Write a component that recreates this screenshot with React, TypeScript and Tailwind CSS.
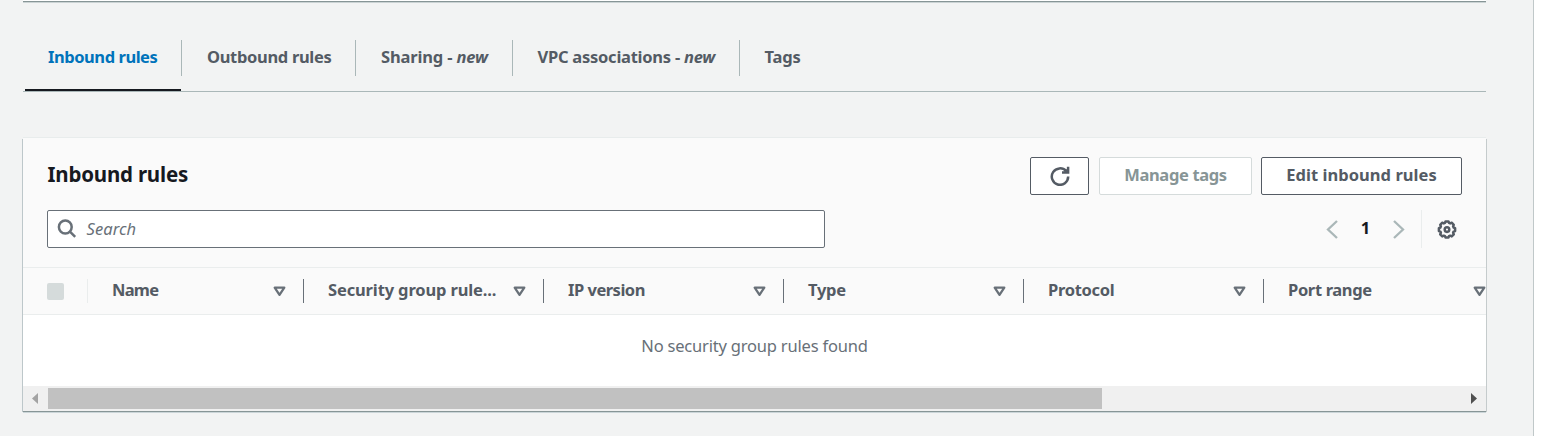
import React from "react";

const tabs = [
  { label: "Inbound rules", width: "w-[157px] pl-[23px]", spacing: "tracking-[-0.45px]", active: true },
  { label: "Outbound rules", width: "w-[174px] pl-[25px]", spacing: "tracking-[-0.33px]" },
  { label: "Sharing - ", isNew: true, width: "w-[157px] pl-[25px]", spacing: "tracking-[-0.15px]" },
  { label: "VPC associations - ", isNew: true, width: "w-[227px] pl-[24.5px]", spacing: "tracking-[-0.25px]" },
  { label: "Tags", width: "w-[90px] pl-[24.5px]", spacing: "tracking-[-0.2px]", last: true },
];

const columns = [
  { label: "Name", spacing: "tracking-[-0.75px]" },
  { label: "Security group rule...", spacing: "tracking-[-0.14px]" },
  { label: "IP version", spacing: "tracking-[-0.5px]" },
  { label: "Type", spacing: "tracking-[-0.3px]" },
  { label: "Protocol", spacing: "tracking-[-0.3px]" },
  { label: "Port range", spacing: "tracking-[-0.35px]" },
];

function SortIcon() {
  return (
    <svg className="block h-[12px] w-[13px] shrink-0" viewBox="0 0 13 12" fill="none">
      <path d="M1.7 2.6H11.3L6.5 9.8Z" stroke="#687078" strokeWidth="2.3" strokeLinejoin="round" />
    </svg>
  );
}

function GearIcon() {
  return (
    <svg className="block size-5" viewBox="0 0 20 20" fill="none" stroke="#545b64" strokeWidth="2.5">
      <path
        strokeLinejoin="round"
        d="M8.5 1.5h3l.5 1.4 1.2.5 1.5-.7 2.1 2.1-.7 1.5.5 1.2 1.5.6v2.9l-1.5.6-.5 1.2.7 1.5-2.1 2.1-1.5-.7-1.2.5-.5 1.4h-3L8 16.2l-1.2-.5-1.5.7-2.1-2.1.7-1.5-.5-1.2-1.500-.6V8.100l1.500-.6.5-1.200-.7-1.500 2.100-2.100 1.500.7L8 2.900z"
      />
      <circle cx="10" cy="9.6" r="2.3" />
    </svg>
  );
}

function Tabs() {
  return (
    <div className="ml-[23px] flex h-[52px] w-[1463px] border-b border-[#aab7b8] pl-[2px]">
      {tabs.map((t) => (
        <div key={t.label} className="flex h-[51px] shrink-0 flex-col justify-between">
          <div
            className={`flex h-9 items-center whitespace-pre pb-[2px] font-bold leading-none ${t.width} ${t.spacing} ${
              t.active ? "text-[#0073bb]" : "text-[#545b64]"
            } ${t.last ? "" : "border-r border-[#aab7b8]"}`}
          >
            <span>
              {t.label}
              {t.isNew && <i>new</i>}
            </span>
          </div>
          {t.active && <div className="h-[2px] w-[156px] bg-[#16191f]" />}
        </div>
      ))}
    </div>
  );
}

export default function App() {
  return (
    <div className="flex h-[436px] w-[1543px] overflow-hidden bg-white font-['Noto_Sans',sans-serif] text-[16.5px]">
      <main className="h-[436px] w-[1534px] shrink-0 border-r border-[#c0c8c9] bg-[#f2f3f3]">
        <div className="ml-[23px] h-[2px] w-[1463px] border-b border-[#879596] bg-white shadow-[0_1px_0_#cbd3d4]" />
        <div className="h-[38px]" />
        <Tabs />

        <section className="ml-[23px] mt-[46px] h-[273px] w-[1463px] bg-white shadow-[0_1px_0_#879596,0_2px_0_#cbd5d8,1px_1px_0_#c5cbcc,-1px_1px_0_#bdc7ca,0_-1px_0_#e8ecec]">
          <div className="h-[130px] border-b border-[#eaeded] bg-[#fafafa] pl-6 pr-6 pt-[19px]">
            <div className="flex h-[38px] items-center">
              <h2 className="grow pb-[4px] pl-[0.5px] text-[20.5px] font-bold leading-none tracking-[-0.2px] text-[#16191f]">Inbound rules</h2>
              <button className="flex h-[38px] w-[59px] items-center justify-center rounded-[2px] border border-[#545b64] bg-white">
                <svg className="block size-5" viewBox="0 0 20 20" fill="none" stroke="#545b64" strokeWidth="2.5">
                  <path d="M18.2 10.6A8.2 8.2 0 1 1 16.2 5.200" />
                  <path d="M18.1 0.800V6.500H12" />
                  <path d="M13.500 5.500L17.500 2.500V6Z" fill="#545b64" stroke="none" />
                </svg>
              </button>
              <button className="ml-[10px] h-[38px] w-[153px] whitespace-nowrap rounded-[2px] border border-[#d5dbdb] bg-white pb-0.5 font-bold leading-none tracking-[-0.36px] text-[#879596]">
                Manage tags
              </button>
              <button className="ml-[9px] h-[38px] w-[201px] whitespace-nowrap rounded-[2px] border border-[#545b64] bg-white pb-0.5 font-bold leading-none tracking-[0.04px] text-[#545b64]">
                Edit inbound rules
              </button>
            </div>
            <div className="mt-[15px] flex h-[38px] items-center">
              <div className="flex h-[38px] w-[778px] items-center rounded-[2px] border border-[#687078] bg-white pl-[9px]">
                <svg className="block size-5" viewBox="0 0 20 20" fill="none" stroke="#687078" strokeWidth="2.5">
                  <circle cx="8.3" cy="8" r="6.4" />
                  <path d="M12.9 12.6L18.2 17.800" />
                </svg>
                <span className="ml-[9.5px] italic leading-none tracking-[0.08px] text-[#687078]">Search</span>
              </div>
              <div className="grow" />
              <svg className="block h-5 w-3" viewBox="0 0 12 20" fill="none" stroke="#aab7b8" strokeWidth="2.3">
                <path d="M11 2L2 10.500L11 19" />
              </svg>
              <span className="w-[55px] pb-0.5 text-center font-bold leading-none text-[#16191f]">1</span>
              <svg className="block h-5 w-3" viewBox="0 0 12 20" fill="none" stroke="#aab7b8" strokeWidth="2.3">
                <path d="M1 2L10 10.500L1 19" />
              </svg>
              <div className="ml-4 h-[38px] w-px bg-[#eaeded]" />
              <div className="ml-[14.5px] mr-[5.5px] pt-[2px]">
                <GearIcon />
              </div>
            </div>
          </div>

          <div className="flex h-[47px] items-center overflow-hidden border-b border-[#eaeded] bg-[#fafafa]">
            <div className="flex h-6 w-[65px] shrink-0 items-center border-r border-[#eaeded] pl-6">
              <span className="size-[17px] rounded-[2px] bg-[#d5dbdb]" />
            </div>
            {columns.map((c, i) => (
              <div
                key={c.label}
                className={`flex h-6 shrink-0 items-center border-r border-[#687078] pl-6 pr-[17px] ${i === 0 ? "w-[216px]" : "w-[240px]"}`}
              >
                <span className={`grow whitespace-nowrap pb-px font-bold leading-none text-[#545b64] ${c.spacing}`}>{c.label}</span>
                <SortIcon />
              </div>
            ))}
          </div>

          <div className="flex h-[71px] items-center justify-center pb-[9px] leading-none tracking-[-0.2px] text-[#687078]">
            No security group rules found
          </div>

          <div className="flex h-[25px] items-center bg-[#f0f0f0] pl-[9px]">
            <svg className="block h-[11px] w-[6px]" viewBox="0 0 6 11">
              <path d="M6 0V11L0 5.5Z" fill="#a3a3a3" />
            </svg>
            <div className="ml-[10px] h-[21px] w-[1054px] bg-[#c1c1c1]" />
            <div className="grow" />
            <svg className="mr-[9px] block h-[11px] w-[6px]" viewBox="0 0 6 11">
              <path d="M0 0V11L6 5.5Z" fill="#505050" />
            </svg>
          </div>
        </section>
      </main>
    </div>
  );
}
